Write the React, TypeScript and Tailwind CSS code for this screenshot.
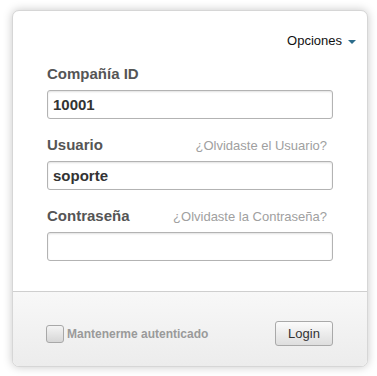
import { useState } from 'react';

const font = { fontFamily: '"Liberation Sans", Arial, sans-serif' };

function Field({
  label,
  link,
  value,
  type = 'text',
  first = false,
}: {
  label: string;
  link?: string;
  value: string;
  type?: string;
  first?: boolean;
}) {
  const [v, setV] = useState(value);
  return (
    <div className={first ? '' : 'mt-[17px]'}>
      <div className="flex h-[18px] items-end justify-between">
        <label className="text-[15px] leading-[18px] font-bold text-[#555]">{label}</label>
        {link && (
          <a href="#" className="mr-[6px] text-[13px] leading-[17px] text-[#a0a0a0]">
            {link}
          </a>
        )}
      </div>
      <input
        type={type}
        value={v}
        onChange={(e) => setV(e.target.value)}
        style={font}
        className="mt-[7px] block h-[29px] w-[286px] rounded-[3px] border border-[#b3b3b3] bg-white px-[5px] text-[15px] font-bold text-[#333] shadow-[inset_0_1px_2px_rgba(0,0,0,0.12)] outline-none"
      />
    </div>
  );
}

export default function App() {
  const [remember, setRemember] = useState(false);
  return (
    <div className="h-[376px] w-[377px] bg-white pt-[10px] pl-[12px]" style={font}>
      <div className="w-[356px] overflow-hidden rounded-[7px] border border-[#d6d6d6] bg-white shadow-[0_0_10px_rgba(0,0,0,0.22)]">
        <div className="flex justify-end pt-[22px] pr-[11px]">
          <button className="flex items-center gap-[6px] text-[13px] leading-[16px] text-[#111]">
            Opciones
            <span className="mt-[1px] h-0 w-0 border-x-[4px] border-t-[4px] border-x-transparent border-t-[#2c6d8c]" />
          </button>
        </div>
        <div className="px-[34px] pt-[16px] pb-[30px]">
          <Field label="Compañía ID" value="10001" first />
          <Field label="Usuario" link="¿Olvidaste el Usuario?" value="soporte" />
          <Field label="Contraseña" link="¿Olvidaste la Contraseña?" value="" type="password" />
        </div>
        <div className="h-[75px] border-t border-[#cfcfcf] bg-gradient-to-b from-[#f8f8f8] to-[#ececec] px-[33px] pt-[29px]">
          <div className="flex items-center justify-between">
            <label className="flex items-center gap-[3px] cursor-pointer">
              <span
                onClick={() => setRemember(!remember)}
                className="block h-[18px] w-[18px] rounded-[3px] border border-[#a8a8a8] bg-gradient-to-b from-[#f4f4f4] to-[#d6d6d6]"
              >
                {remember && <span className="block text-center text-[12px] leading-[16px] text-[#333]">✓</span>}
              </span>
              <span className="text-[12px] font-bold text-[#9a9a9a]">Mantenerme autenticado</span>
            </label>
            <button className="mr-[1px] h-[25px] w-[58px] rounded-[3px] border border-[#a9a9a9] bg-gradient-to-b from-[#fbfbfb] to-[#dedede] text-[13px] text-[#333]">
              Login
            </button>
          </div>
        </div>
      </div>
    </div>
  );
}
